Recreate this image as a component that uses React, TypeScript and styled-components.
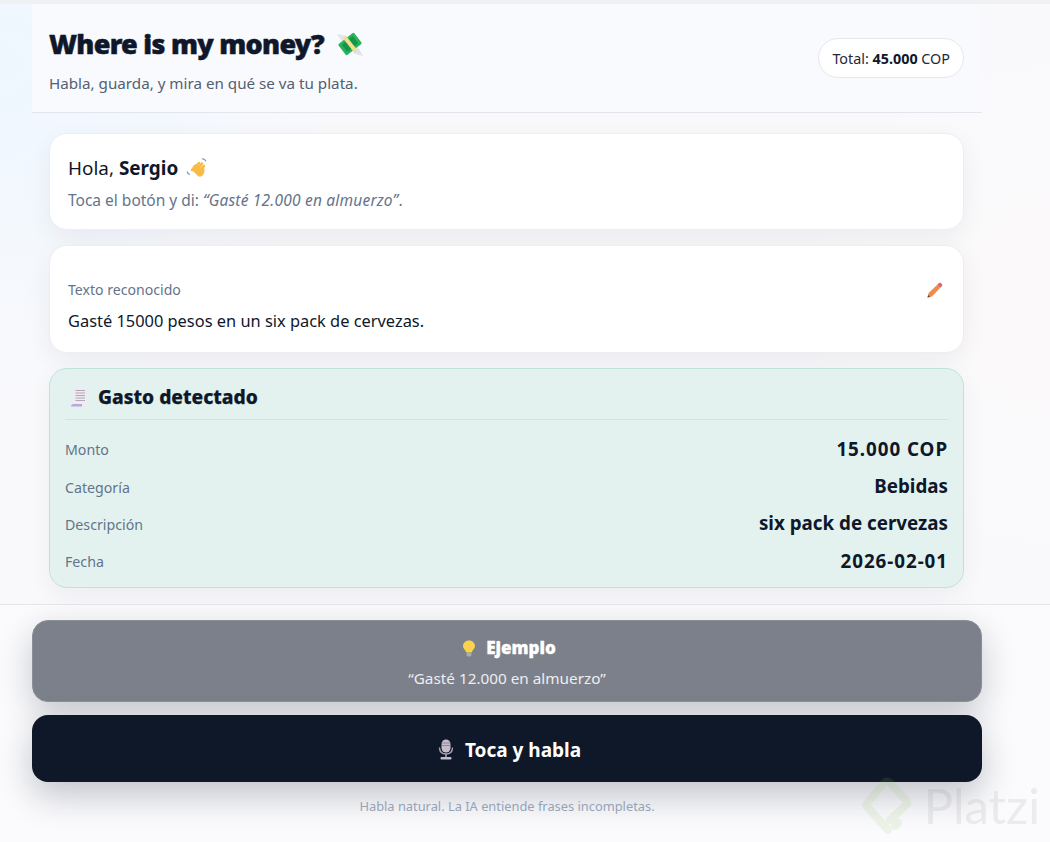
import React from 'react'
import styled, { createGlobalStyle } from 'styled-components'

const GlobalStyle = createGlobalStyle`
  html, body {
    margin: 0;
    padding: 0;
    height: 100%;
  }
  body {
    font-family: "Noto Sans", "Open Sans", "Liberation Sans", sans-serif;
    color: #0f172a;
    background: #fbfbfd;
    overflow: hidden;
  }
`

const Page = styled.div`
  position: relative;
  width: 1050px;
  height: 842px;
  overflow: hidden;
  border-top: 4px solid #f0f1f3;
  box-sizing: border-box;
  background:
    radial-gradient(circle at 0 60px, #eef7ff 0, rgba(238, 247, 255, 0) 330px),
    radial-gradient(circle at 1050px 300px, #fcf9fa 0, rgba(252, 249, 250, 0) 260px),
    #f9f9fc;
  display: flex;
  flex-direction: column;
`
const Column = styled.main`
  width: 950px;
  margin-left: 32px;
  display: flex;
  flex-direction: column;
`
const Header = styled.header`
  height: 109px;
  box-sizing: border-box;
  padding: 0 18px 0 17px;
  border-bottom: 1px solid #e2e6ec;
  background: #f9fafd;
  display: flex;
  align-items: center;
  justify-content: space-between;
`
const TitleBlock = styled.div`
  padding-top: 2px;
`
const Title = styled.h1`
  margin: 0;
  font-size: 27px;
  line-height: 36px;
  font-weight: 900;
  letter-spacing: -0.72px;
  -webkit-text-stroke: 0.5px #0f172a;
  color: #0f172a;
  display: flex;
  align-items: center;
  gap: 12px;
`
const Subtitle = styled.p`
  margin: 11px 0 0;
  font-size: 15.2px;
  line-height: 20px;
  color: #536072;
`
const TotalPill = styled.div`
  height: 40px;
  box-sizing: border-box;
  padding: 0 13px;
  border: 1px solid #e6e8ed;
  border-radius: 20px;
  background: #fff;
  font-size: 14.35px;
  display: flex;
  align-items: center;
  white-space: pre;
  color: #1e293b;
  b {
    color: #0f172a;
    font-weight: 700;
  }
`
const Stack = styled.section`
  padding: 20px 18px 16px 17px;
  display: flex;
  flex-direction: column;
  gap: 15px;
`
const Card = styled.div`
  border: 1px solid #eceef2;
  border-radius: 18px;
  background: #fff;
  box-shadow: 0 8px 26px rgba(15, 23, 42, 0.06);
  box-sizing: border-box;
  padding: 0 18px;
`
const GreetingCard = styled(Card)`
  height: 97px;
  padding-top: 2px;
  display: flex;
  flex-direction: column;
  justify-content: center;
`
const Greeting = styled.div`
  font-size: 18.9px;
  line-height: 26px;
  display: flex;
  align-items: center;
  white-space: pre;
  b {
    font-weight: 700;
  }
  svg {
    margin-left: 7px;
  }
`
const Hint = styled.div`
  margin-top: 9px;
  font-size: 15.5px;
  line-height: 20px;
  color: #64748b;
  em {
    font-style: italic;
    letter-spacing: 0.2px;
  }
`
const RecognizedCard = styled(Card)`
  height: 108px;
  padding-top: 34px;
`
const RecognizedHead = styled.div`
  display: flex;
  justify-content: space-between;
  align-items: center;
  font-size: 14.1px;
  line-height: 20px;
  color: #64748b;
  svg {
    margin-right: 2px;
  }
`
const RecognizedText = styled.div`
  margin-top: 9px;
  font-size: 16.4px;
  line-height: 24px;
  color: #0f172a;
`
const DetectedCard = styled.div`
  height: 220px;
  box-sizing: border-box;
  border: 1px solid #bfe3d8;
  border-radius: 18px;
  background: #e3f2ee;
  padding: 13px 15px 0;
  box-shadow: 0 8px 26px rgba(15, 23, 42, 0.05);
`
const DetectedTitle = styled.h2`
  margin: 0;
  height: 37px;
  border-bottom: 1px solid #cfe5df;
  font-size: 19.2px;
  font-weight: 800;
  line-height: 30px;
  -webkit-text-stroke: 0.25px #0f172a;
  color: #0f172a;
  display: flex;
  align-items: flex-start;
  gap: 8px;
  padding-left: 5px;
  svg {
    margin-top: 5px;
  }
`
const Rows = styled.div`
  margin-top: 11px;
  display: flex;
  flex-direction: column;
`
const Row = styled.div`
  height: 37.4px;
  display: flex;
  justify-content: space-between;
  align-items: center;
`
const RowLabel = styled.span`
  font-size: 14.2px;
  color: #64748b;
`
const RowValue = styled.span<{ $wide?: boolean }>`
  padding-bottom: 2px;
  font-size: 18.8px;
  font-weight: 700;
  letter-spacing: ${(props) => (props.$wide ? '0.95px' : '0')};
  color: #0f172a;
`
const Footer = styled.footer`
  flex: 1;
  border-top: 1px solid #e4e6eb;
  background: #fbfbfd;
  padding-top: 15px;
`
const FooterColumn = styled.div`
  width: 950px;
  margin-left: 32px;
  display: flex;
  flex-direction: column;
  gap: 13px;
`
const ExampleButton = styled.button`
  height: 82px;
  border: 1px solid #8b8f98;
  border-radius: 16px;
  background: #7c808a;
  color: #fff;
  font-family: inherit;
  box-shadow: 0 12px 34px rgba(15, 23, 42, 0.22);
  display: flex;
  flex-direction: column;
  align-items: center;
  justify-content: center;
  gap: 10px;
  padding: 2px 0 0;
`
const ExampleTitle = styled.span`
  padding-left: 4px;
  font-size: 17px;
  line-height: 22px;
  font-weight: 900;
  -webkit-text-stroke: 0.3px #fff;
  display: flex;
  align-items: center;
  gap: 10px;
`
const ExampleQuote = styled.span`
  font-size: 15.3px;
  line-height: 18px;
  color: #eceef1;
`
const SpeakButton = styled.button`
  height: 67px;
  border: none;
  border-radius: 16px;
  background: #0f1828;
  color: #fff;
  font-family: inherit;
  font-size: 19px;
  font-weight: 700;
  box-shadow: 0 14px 34px rgba(15, 23, 42, 0.24);
  display: flex;
  align-items: center;
  justify-content: center;
  gap: 11px;
  padding: 2px 0 0 5px;
`
const FootNote = styled.div`
  margin-top: 2px;
  text-align: center;
  font-size: 12.85px;
  line-height: 18px;
  color: #94a3b8;
`
const Watermark = styled.div`
  position: absolute;
  right: 10px;
  bottom: 8px;
  display: flex;
  align-items: center;
  gap: 12px;
  font-family: "Lato", sans-serif;
  font-size: 49px;
  line-height: 58px;
  color: rgba(120, 125, 135, 0.12);
  pointer-events: none;
`

const MoneyIcon = () => (
  <svg width="28" height="28" viewBox="0 0 28 28">
    <path d="M1 4 L11 6 L6 12 Z" fill="#e3e6ea" />
    <path d="M27 26 L17 23 L22 17 Z" fill="#dfe2e6" />
    <rect x="4" y="7" width="20" height="14" rx="1.5" fill="#25b35c" transform="rotate(-38 14 14)" />
    <rect x="7" y="9.5" width="14" height="9" rx="1" fill="#17944a" transform="rotate(-38 14 14)" />
    <rect x="12" y="5" width="4" height="18" fill="#efe08a" transform="rotate(-38 14 14)" />
  </svg>
)
const WaveIcon = () => (
  <svg width="24" height="22" viewBox="0 0 24 22">
    <path d="M7 13 L13 19 C16 21 19 18 19.5 14 L19 7.5 L16 11 L11 7 L8 9 Z" fill="#f8bb45" />
    <g stroke="#f8bb45" strokeWidth="2.6" strokeLinecap="round">
      <path d="M7 13 L12 8" />
      <path d="M9.5 13 L14 6" />
      <path d="M12 13 L17 6.5" />
      <path d="M15 13.5 L19 9" />
    </g>
    <path d="M17 2 C18.6 1.6 20.4 2.8 20.8 4.4" stroke="#6f9fcb" strokeWidth="1.2" fill="none" />
    <path d="M2 14.5 C2.4 16 3.4 17.2 4.8 17.6" stroke="#6f9fcb" strokeWidth="1.2" fill="none" />
  </svg>
)
const PencilIcon = () => (
  <svg width="16" height="16" viewBox="0 0 16 16">
    <path d="M0.5 15.5 L1.6 11 L10 3 L13 6 L5 14.4 Z" fill="#ee8d4a" />
    <path d="M0.5 15.5 L1.1 12.9 L3.1 14.9 Z" fill="#5b4636" />
    <path d="M10 3 L12 1 C12.6 0.5 13.2 0.5 13.8 1 L15 2.2 C15.5 2.8 15.5 3.4 15 4 L13 6 Z" fill="#e0646a" />
  </svg>
)
const ReceiptIcon = () => (
  <svg width="20" height="20" viewBox="0 0 20 20">
    <rect x="3.5" y="0.5" width="13" height="18" fill="#efeaf3" />
    <path d="M5.5 3.5 H15 M5.5 6 H15 M5.5 8.5 H15 M5.5 11 H15 M5.5 13.5 H15" stroke="#a79fb5" strokeWidth="0.9" />
    <path d="M1 19.5 C1 18 2 17 3.5 17 H12 V19.5 Z" fill="#b9a9d6" />
  </svg>
)
const BulbIcon = () => (
  <svg width="14" height="17" viewBox="0 0 14 17">
    <path d="M7 0.5 C3.4 0.5 1 3 1 6 C1 8.6 3.4 9.8 4.4 12.5 H9.6 C10.6 9.8 13 8.6 13 6 C13 3 10.6 0.5 7 0.5 Z" fill="#fbd24e" />
    <path d="M4.6 13 H9.4 V15 C9.4 16 8 16.5 7 16.5 C6 16.5 4.6 16 4.6 15 Z" fill="#a9adb5" />
  </svg>
)
const MicIcon = () => (
  <svg width="16" height="21" viewBox="0 0 16 21">
    <rect x="3.5" y="0.5" width="9" height="13" rx="4.5" fill="#c4bccb" />
    <path d="M4 4 H12 M4 6.5 H12" stroke="#8c8593" strokeWidth="0.9" />
    <path d="M1.5 8.5 C1.5 13 4 15 8 15 C12 15 14.5 13 14.5 8.5" stroke="#aaa3b0" strokeWidth="1.4" fill="none" />
    <path d="M8 15 V18" stroke="#aaa3b0" strokeWidth="1.6" />
    <rect x="2.5" y="18" width="11" height="2.5" rx="1" fill="#c4bccb" />
  </svg>
)
const PlatziMark = () => (
  <svg width="50" height="58" viewBox="0 0 50 58" fill="none">
    <path
      d="M33 50 L36 47 M26 54 L5 31 C4 30 4 28 5 27 L22 7 C24 5 26 5 28 7 L44 24 C45.5 25.5 45.5 27.5 44 29 L28 44"
      stroke="rgba(150, 190, 90, 0.13)"
      strokeWidth="8"
      strokeLinecap="round"
      strokeLinejoin="round"
    />
  </svg>
)

const rows = [
  { label: 'Monto', value: '15.000 COP', wide: true },
  { label: 'Categoría', value: 'Bebidas', wide: false },
  { label: 'Descripción', value: 'six pack de cervezas', wide: false },
  { label: 'Fecha', value: '2026-02-01', wide: true },
]

const App: React.FC = () => (
  <Page>
    <GlobalStyle />
    <Column>
      <Header>
        <TitleBlock>
          <Title>
            Where is my money? <MoneyIcon />
          </Title>
          <Subtitle>Habla, guarda, y mira en qué se va tu plata.</Subtitle>
        </TitleBlock>
        <TotalPill>
          Total: <b>45.000</b> COP
        </TotalPill>
      </Header>
      <Stack>
        <GreetingCard>
          <Greeting>
            Hola, <b>Sergio</b>
            <WaveIcon />
          </Greeting>
          <Hint>
            Toca el botón y di: <em>“Gasté 12.000 en almuerzo”</em>.
          </Hint>
        </GreetingCard>
        <RecognizedCard>
          <RecognizedHead>
            Texto reconocido
            <PencilIcon />
          </RecognizedHead>
          <RecognizedText>Gasté 15000 pesos en un six pack de cervezas.</RecognizedText>
        </RecognizedCard>
        <DetectedCard>
          <DetectedTitle>
            <ReceiptIcon />
            Gasto detectado
          </DetectedTitle>
          <Rows>
            {rows.map((row) => (
              <Row key={row.label}>
                <RowLabel>{row.label}</RowLabel>
                <RowValue $wide={row.wide}>{row.value}</RowValue>
              </Row>
            ))}
          </Rows>
        </DetectedCard>
      </Stack>
    </Column>
    <Footer>
      <FooterColumn>
        <ExampleButton>
          <ExampleTitle>
            <BulbIcon />
            Ejemplo
          </ExampleTitle>
          <ExampleQuote>“Gasté 12.000 en almuerzo”</ExampleQuote>
        </ExampleButton>
        <SpeakButton>
          <MicIcon />
          Toca y habla
        </SpeakButton>
        <FootNote>Habla natural. La IA entiende frases incompletas.</FootNote>
      </FooterColumn>
    </Footer>
    <Watermark>
      <PlatziMark />
      Platzi
    </Watermark>
  </Page>
)

export default App
